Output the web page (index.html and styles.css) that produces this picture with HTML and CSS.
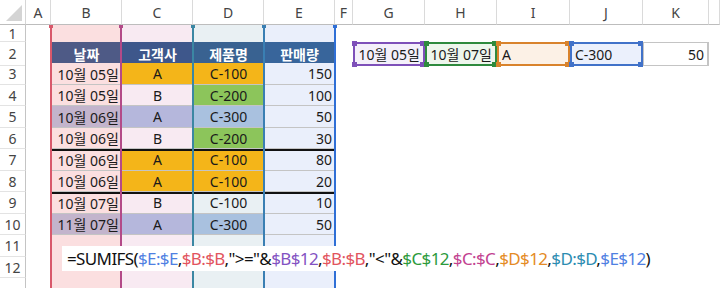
FILE: index.html
```html
<!DOCTYPE html>
<html lang="ko">
<head>
<meta charset="utf-8">
<link rel="stylesheet" href="styles.css">
</head>
<body>
<div class="sheet">
  <div class="r hdr">
    <div class="corner"><svg width="16" height="16" viewBox="0 0 16 16"><polygon points="16,0 16,16 0,16" fill="#d4d4d4"/></svg></div>
    <div class="c ch">A</div><div class="c ch">B</div><div class="c ch">C</div><div class="c ch">D</div><div class="c ch">E</div><div class="c ch">F</div><div class="c ch">G</div><div class="c ch">H</div><div class="c ch">I</div><div class="c ch">J</div><div class="c ch">K</div><div class="c ch"></div>
  </div>
  <div class="r r1">
    <div class="c rh">1</div><div class="c"></div>
    <div class="c tb"></div><div class="c tc"></div><div class="c td"></div><div class="c te"></div>
    <div class="c"></div><div class="c"></div><div class="c"></div><div class="c"></div><div class="c"></div><div class="c"></div><div class="c"></div>
  </div>
  <div class="r h21">
    <div class="c rh">2</div><div class="c"></div>
    <div class="c th hb">날짜</div><div class="c th hc">고객사</div><div class="c th hd">제품명</div><div class="c th he">판매량</div>
    <div class="c"></div>
    <div class="c rt sel sg">10월 05일</div>
    <div class="c rt sel sh">10월 07일</div>
    <div class="c sel si">A</div>
    <div class="c sel sj">C-300</div>
    <div class="c rt sk">50</div>
    <div class="c"></div>
  </div>
  <div class="r h22">
    <div class="c rh">3</div><div class="c"></div>
    <div class="c rt tb dl">10월 05일</div><div class="c ct or dl">A</div><div class="c ct or dl">C-100</div><div class="c rt te dl">150</div>
    <div class="c"></div><div class="c"></div><div class="c"></div><div class="c"></div><div class="c"></div><div class="c"></div><div class="c"></div>
  </div>
  <div class="r h21">
    <div class="c rh">4</div><div class="c"></div>
    <div class="c rt tb dl">10월 05일</div><div class="c ct tc dl">B</div><div class="c ct gr dl">C-200</div><div class="c rt te dl">100</div>
    <div class="c"></div><div class="c"></div><div class="c"></div><div class="c"></div><div class="c"></div><div class="c"></div><div class="c"></div>
  </div>
  <div class="r h22">
    <div class="c rh">5</div><div class="c"></div>
    <div class="c rt mv dl">10월 06일</div><div class="c ct lv dl">A</div><div class="c ct bl dl">C-300</div><div class="c rt te dl">50</div>
    <div class="c"></div><div class="c"></div><div class="c"></div><div class="c"></div><div class="c"></div><div class="c"></div><div class="c"></div>
  </div>
  <div class="r h21">
    <div class="c rh">6</div><div class="c"></div>
    <div class="c rt tb dl">10월 06일</div><div class="c ct tc dl">B</div><div class="c ct gr dl">C-200</div><div class="c rt te dl">30</div>
    <div class="c"></div><div class="c"></div><div class="c"></div><div class="c"></div><div class="c"></div><div class="c"></div><div class="c"></div>
  </div>
  <div class="r h22">
    <div class="c rh">7</div><div class="c"></div>
    <div class="c rt tb dl tk">10월 06일</div><div class="c ct or dl tk">A</div><div class="c ct or dl tk">C-100</div><div class="c rt te dl tk">80</div>
    <div class="c"></div><div class="c"></div><div class="c"></div><div class="c"></div><div class="c"></div><div class="c"></div><div class="c"></div>
  </div>
  <div class="r h21">
    <div class="c rh">8</div><div class="c"></div>
    <div class="c rt tb dl">10월 06일</div><div class="c ct or dl">A</div><div class="c ct or dl">C-100</div><div class="c rt te dl">20</div>
    <div class="c"></div><div class="c"></div><div class="c"></div><div class="c"></div><div class="c"></div><div class="c"></div><div class="c"></div>
  </div>
  <div class="r h22">
    <div class="c rh">9</div><div class="c"></div>
    <div class="c rt tb dl tk">10월 07일</div><div class="c ct tc dl tk">B</div><div class="c ct td dl tk">C-100</div><div class="c rt te dl tk">10</div>
    <div class="c"></div><div class="c"></div><div class="c"></div><div class="c"></div><div class="c"></div><div class="c"></div><div class="c"></div>
  </div>
  <div class="r h21">
    <div class="c rh">10</div><div class="c"></div>
    <div class="c rt mv dl">11월 07일</div><div class="c ct lv dl">A</div><div class="c ct bl dl">C-300</div><div class="c rt te dl">50</div>
    <div class="c"></div><div class="c"></div><div class="c"></div><div class="c"></div><div class="c"></div><div class="c"></div><div class="c"></div>
  </div>
  <div class="r h22">
    <div class="c rh">11</div><div class="c"></div>
    <div class="c tb"></div><div class="c tc"></div><div class="c td"></div><div class="c te"></div>
    <div class="c"></div><div class="c"></div><div class="c"></div><div class="c"></div><div class="c"></div><div class="c"></div><div class="c"></div>
  </div>
  <div class="r h21">
    <div class="c rh">12</div><div class="c"></div>
    <div class="c tb"></div><div class="c tc"></div><div class="c td"></div><div class="c te"></div>
    <div class="c"></div><div class="c"></div><div class="c"></div><div class="c"></div><div class="c"></div><div class="c"></div><div class="c"></div>
  </div>
  <div class="r h22">
    <div class="c rh"></div><div class="c"></div>
    <div class="c tb"></div><div class="c tc"></div><div class="c td"></div><div class="c te"></div>
    <div class="c"></div><div class="c"></div><div class="c"></div><div class="c"></div><div class="c"></div><div class="c"></div><div class="c"></div>
  </div>

  <div class="vl v1"></div>
  <div class="vl v2"></div>
  <div class="vl v3"></div>
  <div class="vl v4"></div>
  <div class="vl v5"></div>

  <div class="formula">=SUMIFS(<span class="fe">$E:$E</span>,<span class="fb">$B:$B</span>,"&gt;="&amp;<span class="fp">$B$12</span>,<span class="fb">$B:$B</span>,"&lt;"&amp;<span class="fg">$C$12</span>,<span class="fm">$C:$C</span>,<span class="fo">$D$12</span>,<span class="ft">$D:$D</span>,<span class="fe">$E$12</span>)</div>
</div>
</body>
</html>
```
FILE: styles.css
```css
html, body {
  margin: 0;
  padding: 0;
  background: #ffffff;
}
body {
  font-family: "Noto Sans", "Noto Sans CJK KR", sans-serif;
  color: #1a1a1a;
}
.sheet {
  position: relative;
  width: 720px;
  height: 288px;
  overflow: hidden;
  display: flex;
  flex-direction: column;
}
.r {
  display: grid;
  grid-template-columns: 26px 25px 71px 71px 71px 71px 18px 72px 72px 73px 73px 66px 1fr;
  flex: none;
}
.hdr { height: 25px; }
.r1 { height: 17px; }
.h21 { height: 21px; }
.h22 { height: 22px; }

.c {
  box-sizing: border-box;
  display: flex;
  align-items: center;
  padding: 0 3px;
  font-size: 14px;
  white-space: nowrap;
  overflow: hidden;
  position: relative;
}
.rt { justify-content: flex-end; }
.ct { justify-content: center; }

.corner {
  box-sizing: border-box;
  border-right: 1px solid #d6d6d6;
  border-bottom: 1px solid #bdbdbd;
  display: flex;
  align-items: flex-end;
  justify-content: flex-end;
  padding: 0 3px 3px 0;
}
.ch {
  justify-content: center;
  color: #444;
  border-right: 1px solid #dadada;
  border-bottom: 1px solid #bdbdbd;
  font-size: 14px;
  padding-top: 1px;
}
.rh {
  justify-content: center;
  color: #444;
  border-right: 1px solid #c4c4c4;
  border-bottom: 1px solid #e3e3e3;
  font-size: 14px;
}

/* column range tints */
.tb { background: #fbdfe0; }
.tc { background: #f8eaf2; }
.td { background: #e9f0f3; }
.te { background: #eaeffb; }

/* header */
.th {
  justify-content: center;
  color: #ffffff;
  font-weight: bold;
  font-size: 14px;
}
.hb { background: #4e5a86; }
.hc { background: #3e578b; }
.hd { background: #396291; }
.he { background: #38659b; }

/* data fills */
.or { background: #f4b519; }
.gr { background: #8cc55b; }
.mv { background: #c3b4cc; }
.lv { background: #b5b7dc; }
.bl { background: #a9c1df; }

.dl { border-bottom: 1px solid #c4c4c4; }
.tk { box-shadow: inset 0 2px 0 #111111; }

/* selected reference cells in row 2 */
.sel {
  --hc: #000;
  --w: 72px;
  border: 2px solid var(--hc);
  overflow: visible;
}
.sel::before, .sel::after {
  content: "";
  position: absolute;
  left: -3px;
  width: 5px;
  height: 5px;
  background: var(--hc);
  box-shadow: calc(var(--w) - 4px) 0 0 var(--hc);
  z-index: 2;
}
.sel::before { top: -3px; }
.sel::after { bottom: -3px; }
.sg { --hc: #7e50b9; background: #f4f0fa; }
.sh { --hc: #2e8a3e; background: #eef6ed; }
.si { --hc: #d9832c; background: #fcf1e6; --w: 73px; }
.sj { --hc: #4172c9; background: #ebf0fc; --w: 73px; }
.sk { border: 1px solid #c4c4c4; border-width: 1px 2px 1px 1px; }

/* range highlight lines */
.vl {
  position: absolute;
  top: 25px;
  bottom: 0;
  width: 2px;
}
.vl::before {
  content: "";
  position: absolute;
  top: 0;
  left: -1px;
  width: 4px;
  height: 3px;
  background: inherit;
}
.v1 { left: 50px; background: #d8586b; }
.v2 { left: 120px; background: #b34a88; }
.v3 { left: 192px; background: #3b87a3; }
.v4 { left: 263px; background: #3a7fb3; }
.v5 { left: 334px; background: #2f6fd6; }

/* formula text box */
.formula {
  position: absolute;
  left: 62px;
  top: 246px;
  height: 25px;
  line-height: 25px;
  padding: 0 5px;
  background: #ffffff;
  font-size: 17px;
  letter-spacing: -0.62px;
  color: #111;
  white-space: nowrap;
  z-index: 3;
}
.fe { color: #4f80e2; }
.fb { color: #e2545e; }
.fp { color: #8352c2; }
.fg { color: #2c9a3c; }
.fm { color: #c2428f; }
.fo { color: #e48b25; }
.ft { color: #2c8cb1; }
```
